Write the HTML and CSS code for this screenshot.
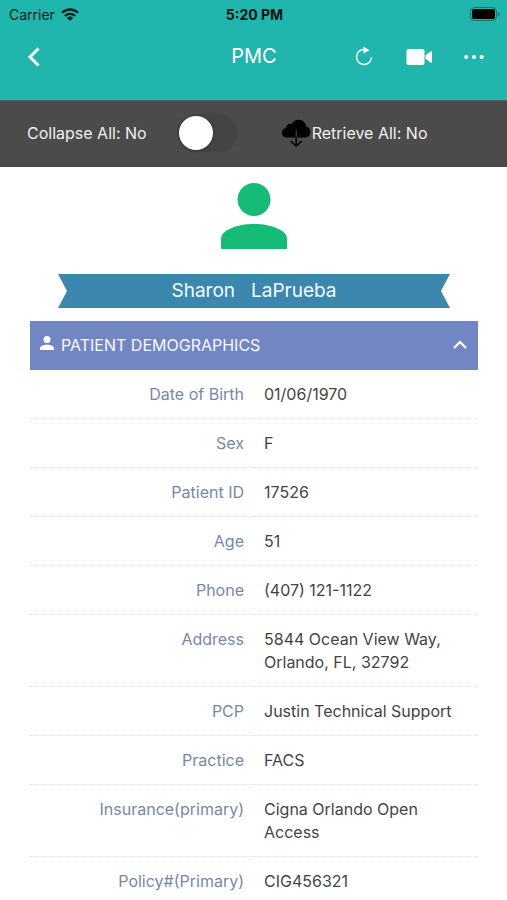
FILE: index.html
```html
<!DOCTYPE html>
<html lang="en">
<head>
<meta charset="utf-8">
<meta name="viewport" content="width=device-width, initial-scale=1">
<title>PMC</title>
<link rel="stylesheet" href="styles.css">
</head>
<body>
<header class="header">
  <div class="status">
    <span class="carrier">Carrier
      <svg class="wifi" viewBox="0 0 18 13" aria-hidden="true"><g fill="none" stroke="#06211f" stroke-width="2.3"><path d="M1 4.8a11.4 11.4 0 0 1 16 0"/><path d="M3.9 8a7.2 7.2 0 0 1 10.2 0"/></g><path fill="#06211f" d="M9 13 5.9 9.9a4.4 4.4 0 0 1 6.2 0z"/></svg>
    </span>
    <strong class="time">5:20 PM</strong>
    <svg class="battery" viewBox="0 0 30 14" aria-hidden="true"><rect x=".5" y=".5" width="26" height="13" rx="4" fill="none" stroke="#13736e"/><rect x="2" y="2" width="23" height="10" rx="2" fill="#000"/><path fill="#13736e" d="M28 4.5q3 2.500 0 5z"/></svg>
  </div>
  <nav class="nav">
    <button class="icon-button" type="button" aria-label="Back">
      <svg class="icon" viewBox="0 0 28 28"><path d="M18.500 5.500 10 14l8.500 8.500" fill="none" stroke="#fff" stroke-width="3"/></svg>
    </button>
    <h1 class="title">PMC</h1>
    <div class="actions">
      <button class="icon-button" type="button" aria-label="Refresh">
        <svg class="icon" viewBox="0 0 28 28"><path d="M14.500 6.500a7.500 7.500 0 1 0 7 7.700" fill="none" stroke="#fff" stroke-width="1.400"/><path fill="#fff" d="m13.500 3.500 6 3.700-6 3.300z"/></svg>
      </button>
      <button class="icon-button" type="button" aria-label="Video call">
        <svg class="icon" viewBox="0 0 28 28"><rect x="1.500" y="6" width="18" height="16" rx="2" fill="#fff"/><path fill="#fff" d="M20.500 12.300 25.500 8.500q1.500-.8 1.500 1v9q0 1.800-1.500 1l-5-3.800z"/></svg>
      </button>
      <button class="icon-button" type="button" aria-label="More">
        <svg class="icon" viewBox="0 0 28 28" fill="#fff"><circle cx="6.300" cy="14" r="2.100"/><circle cx="14" cy="14" r="2.100"/><circle cx="21.700" cy="14" r="2.100"/></svg>
      </button>
    </div>
  </nav>
</header>
<section class="toolbar" aria-label="Options">
  <label class="collapse">
    <span>Collapse All: No</span>
    <input class="switch" type="checkbox" role="switch">
  </label>
  <button class="retrieve" type="button">
    <svg class="cloud" viewBox="0 0 30 28" aria-hidden="true"><path fill="#000" d="M6 18.500C2.700 18.500.8 16.500.8 13.700c0-2.800 1.900-4.500 4.200-4.800C5.300 6.200 8 4.100 10.800 5 12.200 2.300 14.800.8 17.500.8c4 0 7.300 2.900 7.700 6.600 2.500.8 4.200 2.700 4.200 5.400 0 3.100-2.200 5.700-5.400 5.700z"/><path d="M15.200 11v7.500" stroke="#4a4a4a"/><path d="M15.200 18.500v8.500M9.800 22l5.400 5.200 5.400-5.200" fill="none" stroke="#000" stroke-width="1.500"/></svg>
    <span>Retrieve All: No</span>
  </button>
</section>
<main class="content">
  <svg class="avatar" viewBox="0 0 66 66" aria-hidden="true" fill="#17bb78"><circle cx="33" cy="16.500" r="16.500"/><path d="M0 66V56C0 47 16 41 33 41s33 6 33 15v10z"/></svg>
  <h2 class="ribbon"><span>Sharon</span><span>LaPrueba</span></h2>
  <section class="panel">
    <button class="panel-header" type="button" aria-expanded="true">
      <svg class="person" viewBox="0 0 14 14" aria-hidden="true" fill="#fff"><circle cx="7" cy="3.500" r="3.500"/><path d="M0 14v-1.700C0 10 3.500 8.700 7 8.700s7 1.300 7 3.600V14z"/></svg>
      <span class="panel-title">PATIENT DEMOGRAPHICS</span>
      <svg class="chevron" viewBox="0 0 14 10" aria-hidden="true"><path d="m1 8 6-6 6 6" fill="none" stroke="#fff" stroke-width="2.200"/></svg>
    </button>
    <table class="details">
      <tbody>
        <tr><th scope="row">Date of Birth</th><td>01/06/1970</td></tr>
        <tr><th scope="row">Sex</th><td>F</td></tr>
        <tr><th scope="row">Patient ID</th><td>17526</td></tr>
        <tr><th scope="row">Age</th><td>51</td></tr>
        <tr><th scope="row">Phone</th><td>(407) 121-1122</td></tr>
        <tr><th scope="row">Address</th><td>5844 Ocean View Way, Orlando, FL, 32792</td></tr>
        <tr><th scope="row">PCP</th><td>Justin Technical Support</td></tr>
        <tr><th scope="row">Practice</th><td>FACS</td></tr>
        <tr><th scope="row">Insurance(primary)</th><td>Cigna Orlando Open Access</td></tr>
        <tr><th scope="row">Policy#(Primary)</th><td>CIG456321</td></tr>
      </tbody>
    </table>
  </section>
</main>
</body>
</html>
```
FILE: styles.css
```css
* {
  box-sizing: border-box;
}

body {
  margin: 0;
  height: 100vh;
  display: flex;
  flex-direction: column;
  background: #fff;
  color: #444;
  font: 16px/23px Inter, "Liberation Sans", sans-serif;
}

button {
  margin: 0;
  padding: 0;
  border: 0;
  background: none;
  color: inherit;
  font: inherit;
  cursor: pointer;
}

svg {
  display: block;
  flex: none;
}

.header {
  flex: none;
  background: #20b5ad;
  padding-bottom: 29px;
}

.status {
  display: grid;
  grid-template-columns: 1fr auto 1fr;
  align-items: center;
  height: 28px;
  padding: 0 7px 0 9px;
  color: #06211f;
  font-size: 14px;
}

.carrier {
  display: flex;
  align-items: center;
  gap: 6px;
}

.wifi {
  width: 18px;
  height: 13px;
}

.time {
  color: #031312;
  font-weight: 700;
}

.battery {
  justify-self: end;
  width: 30px;
  height: 14px;
}

.nav {
  display: grid;
  grid-template-columns: 1fr auto 1fr;
  align-items: center;
  height: 43px;
  padding: 14px 19px 0 20px;
}

.icon-button,
.icon {
  width: 28px;
  height: 28px;
}

.title {
  margin: 0;
  color: #fff;
  font-size: 20px;
  font-weight: 400;
}

.actions {
  display: flex;
  justify-content: flex-end;
  gap: 27px;
}

.toolbar {
  flex: none;
  display: flex;
  align-items: center;
  gap: 43px;
  height: 67px;
  padding: 0 27px 2px;
  border-top: 1px solid #466b69;
  background: #4b4b4b;
  color: #f0f0f0;
}

.collapse {
  display: flex;
  align-items: center;
  gap: 30px;
}

.switch {
  appearance: none;
  width: 61px;
  height: 38px;
  margin: 0;
  border-radius: 19px;
  background: #444;
}

.switch::before {
  content: "";
  display: block;
  width: 34px;
  height: 34px;
  margin: 2px;
  border-radius: 50%;
  background: #fff;
  box-shadow: 0 1px 3px #2228;
}

.switch:checked::before {
  margin-left: 25px;
}

.retrieve {
  display: flex;
  align-items: center;
  gap: 1px;
}

.cloud {
  width: 30px;
  height: 28px;
}

.content {
  flex: 1;
  min-height: 0;
  overflow-y: auto;
  scrollbar-width: none;
  padding: 16px 29px 0 30px;
}

.avatar {
  width: 66px;
  height: 66px;
  margin: 0 auto;
}

.ribbon {
  display: flex;
  justify-content: center;
  gap: 16px;
  margin: 25px 28px 13px;
  background: #3b87ae;
  clip-path: polygon(0 0, 100% 0, calc(100% - 9px) 50%, 100% 100%, 0 100%, 9px 50%);
  color: #f4fbff;
  font-size: 19px;
  font-weight: 400;
  line-height: 34px;
}

.panel-header {
  display: flex;
  align-items: center;
  width: 100%;
  height: 49px;
  padding: 0 11px 0 10px;
  background: #7386c4;
  color: #f7f9ff;
  text-align: left;
}

.person {
  width: 14px;
  height: 14px;
  margin: 0 7px 6px 0;
}

.panel-title {
  flex: 1;
}

.chevron {
  width: 14px;
  height: 10px;
  margin-bottom: 2px;
}

.details {
  width: 100%;
  table-layout: fixed;
  border-spacing: 0;
}

.details th,
.details td {
  padding: 13px 10px 12px;
  border-bottom: 1px dotted #dbe3e5;
  font-weight: 400;
  text-align: left;
  vertical-align: top;
}

.details th {
  color: #7689a5;
  text-align: right;
}
```
